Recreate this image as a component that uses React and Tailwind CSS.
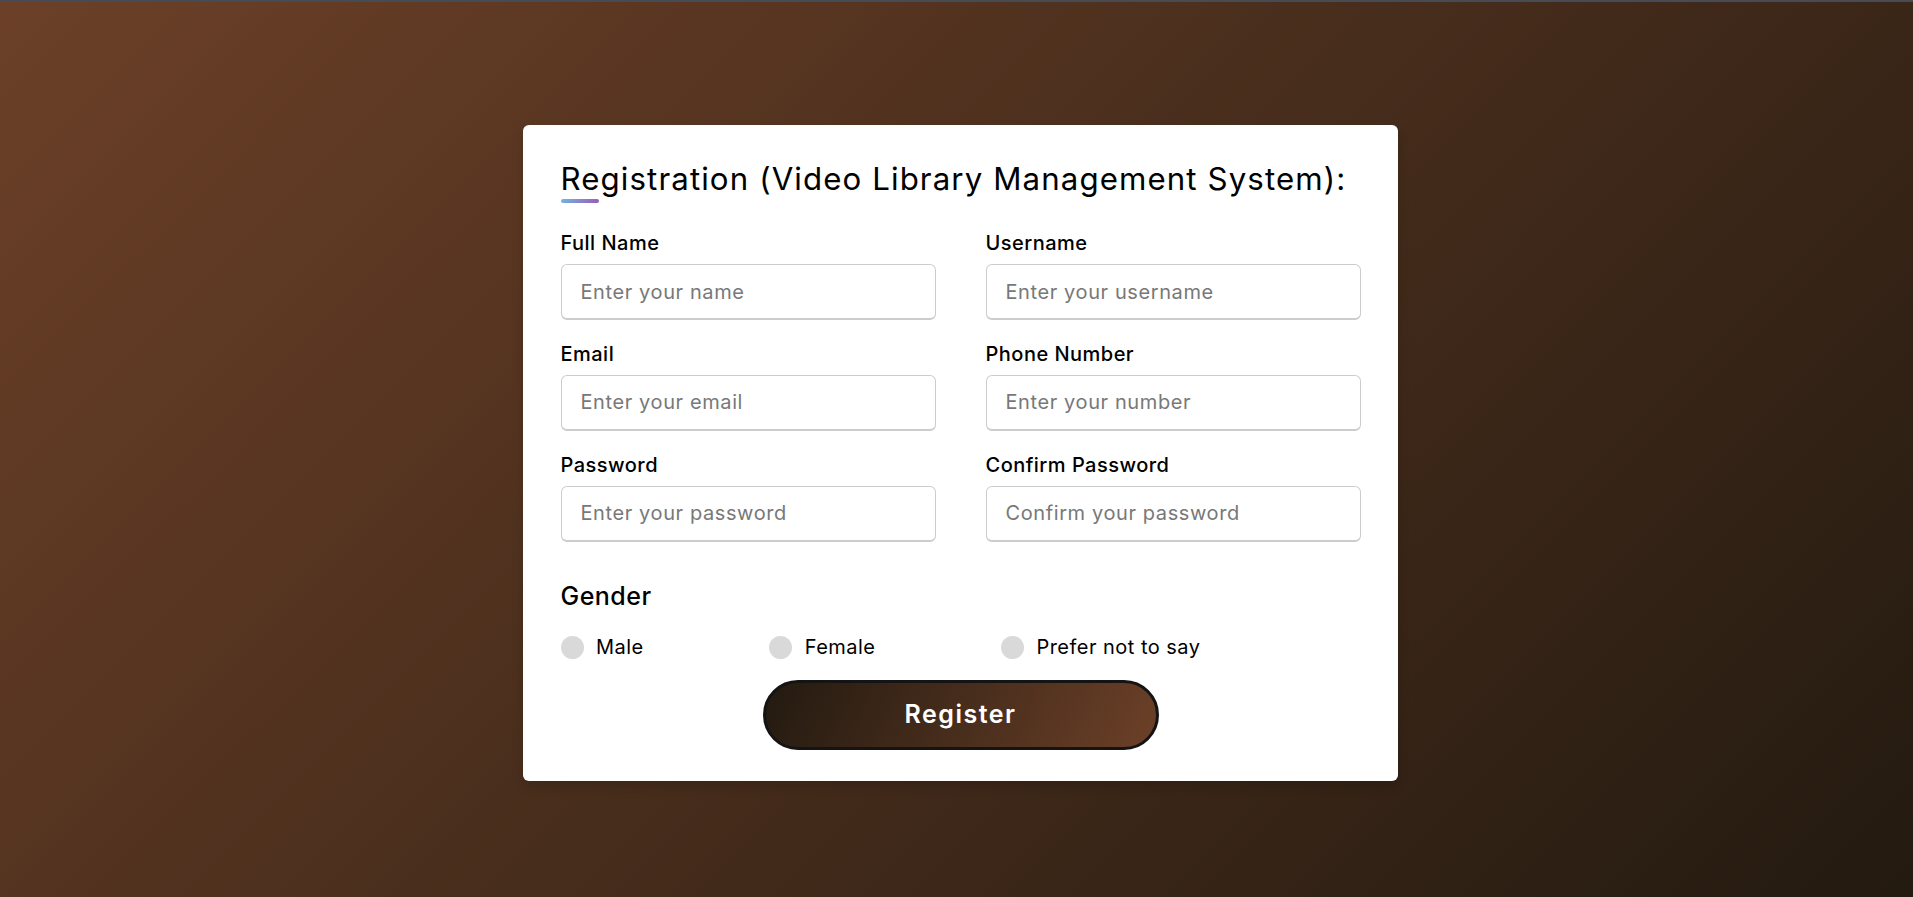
import React from "react";

const fields = [
  ["Full Name", "Enter your name"],
  ["Username", "Enter your username"],
  ["Email", "Enter your email"],
  ["Phone Number", "Enter your number"],
  ["Password", "Enter your password"],
  ["Confirm Password", "Confirm your password"],
];

export default function App() {
  return (
    <div
      className="h-screen w-full overflow-hidden flex flex-col bg-[linear-gradient(135deg,#6c4028_0%,#231a10_100%)] tracking-[0.03em]"
      style={{ fontFamily: "Inter, 'Open Sans', sans-serif" }}
    >
      <div className="h-[2px] w-full bg-[#474b53] shrink-0" />
      <div className="flex justify-center pt-[123px] pl-[8px]">
        <div className="w-[875px] bg-white rounded-[6px] px-[37.5px] pt-[31px] pb-[31px] shadow-[0_6px_12px_rgba(0,0,0,0.15)] text-black">
          <div className="relative text-[31.25px] leading-[47px] font-normal tracking-[0.035em]">
            Registration (Video Library Management System):
            <span className="absolute left-0 bottom-0 h-[4px] w-[38px] rounded-[6px] bg-[linear-gradient(135deg,#71b7e6,#9b59b6)]" />
          </div>
          <div className="mt-[25px] grid grid-cols-2 gap-x-[50px]">
            {fields.map(([label, ph]) => (
              <div key={label} className="mb-[18.75px]">
                <span className="block text-[20px] leading-[30px] font-medium mb-[6px]">{label}</span>
                <input
                  type="text"
                  placeholder={ph}
                  className="block h-[56px] w-full rounded-[6px] border border-[#ccc] border-b-2 pl-[19px] text-[20px] tracking-[0.03em] outline-none placeholder:text-[#787878]"
                />
              </div>
            ))}
          </div>
          <div className="mt-[18px]">
            <div className="text-[25px] leading-[37.5px] font-medium">Gender</div>
            <div className="mt-[16.5px] flex w-[640px] justify-between">
              {["Male", "Female", "Prefer not to say"].map((g) => (
                <label key={g} className="flex items-center h-[30px] text-[20px] leading-[30px]">
                  <span className="h-[23px] w-[23px] rounded-full bg-[#d9d9d9] mr-[12.5px]" />
                  {g}
                </label>
              ))}
            </div>
          </div>
          <div className="mt-[17.5px] flex justify-center">
            <button className="h-[70px] w-[396px] rounded-full border-[3px] border-[#141414] bg-[linear-gradient(115deg,#231a10_0%,#6c4028_100%)] text-white text-[25px] font-semibold tracking-[1.5px]">
              Register
            </button>
          </div>
        </div>
      </div>
    </div>
  );
}
